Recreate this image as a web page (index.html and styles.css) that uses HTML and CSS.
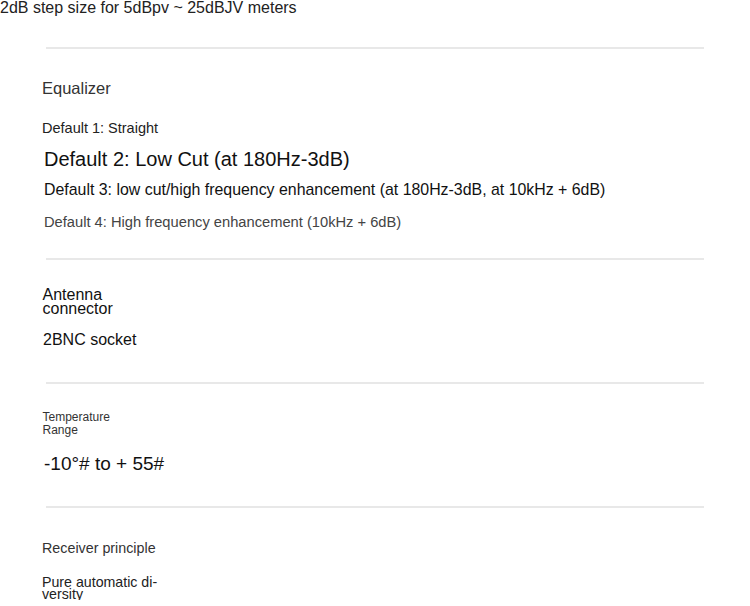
FILE: index.html
```
<!DOCTYPE html>
<html lang="en">
<head>
<meta charset="UTF-8" />
<meta name="viewport" content="width=device-width, initial-scale=1" />
<title>Receiver Specifications</title>
<link rel="stylesheet" href="styles.css">
</head>
<body>
  <p class="intro">2dB step size for 5dBpv ~ 25dBJV meters</p>
  <hr class="divider first">

  <div class="spec" id="equalizer">
    <h3 class="label eq-label">Equalizer</h3>
    <p class="value eq-1">Default 1: Straight</p>
    <p class="value eq-2">Default 2: Low Cut (at 180Hz-3dB)</p>
    <p class="value eq-3">Default 3: low cut/high frequency enhancement (at 180Hz-3dB, at 10kHz + 6dB)</p>
    <p class="value eq-4">Default 4: High frequency enhancement (10kHz + 6dB)</p>
  </div>
  <hr class="divider after-eq">

  <div class="spec" id="antenna">
    <h3 class="label ant-label">Antenna<br>connector</h3>
    <p class="value ant-value">2BNC socket</p>
  </div>
  <hr class="divider after-ant">

  <div class="spec" id="temperature">
    <h3 class="label temp-label">Temperature<br>Range</h3>
    <p class="value temp-value">-10°# to + 55#</p>
  </div>
  <hr class="divider after-temp">

  <div class="spec" id="receiver">
    <h3 class="label recv-label">Receiver principle</h3>
    <p class="value recv-value">Pure automatic di-<br>versity</p>
  </div>
</body>
</html>
```

FILE: styles.css
```
/* Reset and base */
* {
  box-sizing: border-box;
}
body {
  font-family: 'Liberation Sans', Arial, sans-serif;
  background: #ffffff;
  color: #1a1a1a;
  margin: 0;
  padding: 0;
  overflow: hidden;
}
p, h3 {
  margin: 0;
  font-weight: 400;
  white-space: nowrap;
}

.intro {
  font-size: 16px;
  line-height: 16px;
  color: #222;
}

.divider {
  border: none;
  height: 2px;
  background: #e8e8e8;
  width: 658px;
  margin: 0 0 0 46px;
}
.divider.first { margin-top: 31px; }
.divider.after-eq { margin-top: 27px; }
.divider.after-ant { margin-top: 32px; }
.divider.after-temp { margin-top: 31px; }

.label {
  margin-left: 42px;
  color: #333;
}
.value {
  margin-left: 44px;
  color: #111;
}

/* Equalizer block */
.eq-label {
  font-size: 16.5px;
  line-height: 20px;
  margin-top: 29px;
}
.eq-1 {
  font-size: 14.5px;
  line-height: 18px;
  margin: 21px 0 0 42px;
  color: #222;
}
.eq-2 {
  font-size: 20px;
  line-height: 24px;
  margin-top: 10px;
}
.eq-3 {
  font-size: 15.9px;
  line-height: 20px;
  margin-top: 9px;
}
.eq-4 {
  font-size: 14.7px;
  line-height: 18px;
  margin-top: 13px;
  color: #444;
}

/* Antenna block */
.ant-label {
  font-size: 16px;
  line-height: 14px;
  margin: 28px 0 0 42.5px;
  color: #111;
}
.ant-value {
  font-size: 16px;
  line-height: 20px;
  margin: 14px 0 0 43px;
}

/* Temperature block */
.temp-label {
  font-size: 12px;
  line-height: 13px;
  margin: 27px 0 0 42.5px;
}
.temp-value {
  font-size: 19px;
  line-height: 22px;
  margin: 16px 0 0 44px;
}

/* Receiver block */
.recv-label {
  font-size: 14.3px;
  line-height: 18px;
  margin-top: 31px;
}
.recv-value {
  font-size: 14.2px;
  line-height: 12px;
  margin: 19px 0 0 42px;
  color: #222;
}
```
